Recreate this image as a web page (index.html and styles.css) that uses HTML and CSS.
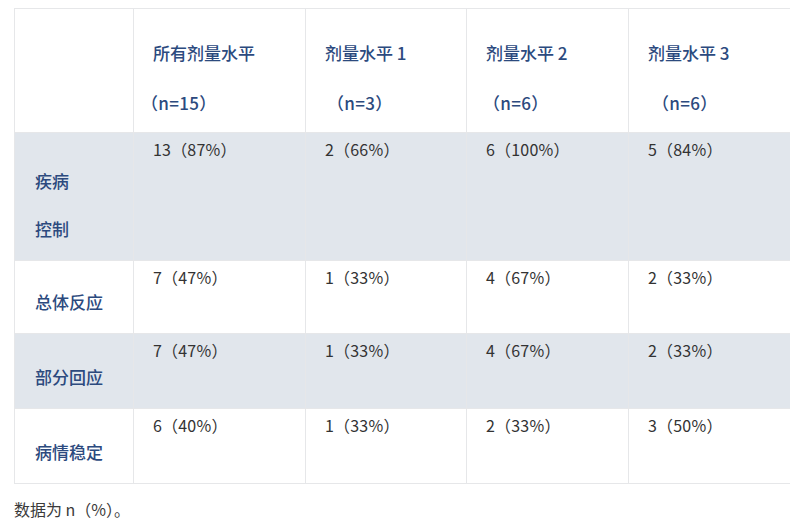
FILE: index.html
```html
<!DOCTYPE html>
<html lang="zh-CN">
<head>
<meta charset="utf-8">
<link rel="stylesheet" href="styles.css">
</head>
<body>
<table class="data">
  <colgroup>
    <col class="c0"><col class="c1"><col class="c2"><col class="c3"><col class="c4">
  </colgroup>
  <tr class="head">
    <th class="corner"></th>
    <th><div class="l1">所有剂量水平</div><div class="l2 s-a">（n=15）</div></th>
    <th><div class="l1">剂量水平 1</div><div class="l2 s-b">（n=3）</div></th>
    <th><div class="l1">剂量水平 2</div><div class="l2 s-c">（n=6）</div></th>
    <th><div class="l1">剂量水平 3</div><div class="l2 s-d">（n=6）</div></th>
  </tr>
  <tr class="shade tall">
    <td class="label">疾病<br>控制</td>
    <td class="val">13（87%）</td>
    <td class="val">2（66%）</td>
    <td class="val">6（100%）</td>
    <td class="val">5（84%）</td>
  </tr>
  <tr class="r2">
    <td class="label">总体反应</td>
    <td class="val">7（47%）</td>
    <td class="val">1（33%）</td>
    <td class="val">4（67%）</td>
    <td class="val">2（33%）</td>
  </tr>
  <tr class="shade r3">
    <td class="label">部分回应</td>
    <td class="val">7（47%）</td>
    <td class="val">1（33%）</td>
    <td class="val">4（67%）</td>
    <td class="val">2（33%）</td>
  </tr>
  <tr class="r3">
    <td class="label">病情稳定</td>
    <td class="val">6（40%）</td>
    <td class="val">1（33%）</td>
    <td class="val">2（33%）</td>
    <td class="val">3（50%）</td>
  </tr>
</table>
<p class="note">数据为 n（%）。</p>
</body>
</html>
```

FILE: styles.css
```css
html, body {
  background: #ffffff;
}
body {
  margin: 8px 10px 0 14px;
  font-family: "Noto Sans CJK SC", sans-serif;
  font-size: 16px;
  color: #333333;
}
.data {
  border-collapse: collapse;
  width: 776px;
  table-layout: fixed;
}
.c0 { width: 119px; }
.c1 { width: 172px; }
.c2 { width: 161px; }
.c3 { width: 162px; }
.c4 { width: 162px; }
.data th, .data td {
  border: 1px solid #e6e7e9;
  padding: 0;
}
.head { height: 124px; }
.data th {
  vertical-align: bottom;
  text-align: left;
  font-weight: 500;
  color: #2c4a7e;
  font-size: 17px;
  line-height: 50px;
  padding: 0 10px 4px 19px;
}
.l2 { letter-spacing: 0.3px; }
.s-a { margin-left: -12px; }
.s-b { margin-left: 2px; }
.s-c { margin-left: -3px; }
.s-d { margin-left: 4px; }
.shade td {
  background: #e1e6ec;
}
.tall { height: 128px; }
.r2 { height: 73px; }
.r3 { height: 75px; }
.label {
  vertical-align: bottom;
  color: #2c4a7e;
  font-weight: 500;
  font-size: 17px;
  line-height: 48px;
  padding: 0 8px 7px 20px !important;
}
.val {
  vertical-align: top;
  line-height: 20px;
  padding: 6px 8px 0 19px !important;
  letter-spacing: 0.2px;
  color: #333333;
}
.note {
  margin: 13px 0 0 0;
  line-height: 24px;
  color: #3a3a3a;
}
```
